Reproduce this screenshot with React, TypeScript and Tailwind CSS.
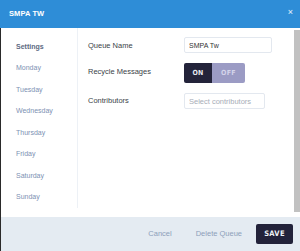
import React, { useState } from 'react';

const days = ['Monday', 'Tuesday', 'Wednesday', 'Thursday', 'Friday', 'Saturday', 'Sunday'];

export default function App() {
  const [recycle, setRecycle] = useState(true);
  const [name, setName] = useState('SMPA Tw');

  return (
    <div className="w-[300px] h-[251px] flex flex-col bg-white overflow-hidden font-['Liberation_Sans',Arial,sans-serif]">
      {/* header */}
      <div className="h-[28px] shrink-0 bg-[#2e8dd7] flex items-center justify-between pl-[9px] pr-[7px] text-white">
        <span className="text-[7.5px] font-bold tracking-[0.1px]">SMPA TW</span>
        <button className="text-[9px] leading-none text-white/90 -mt-[4px]">×</button>
      </div>

      {/* body */}
      <div className="flex-1 flex border-l border-[#2a2a2a] min-h-0">
        <div className="w-[77px] shrink-0 self-start border-r border-[#edf1f6] pt-[8px]">
          <div className="h-[21.5px] flex items-center pl-[15px] text-[7px] font-bold text-[#5c6a82]">Settings</div>
          {days.map((d) => (
            <div key={d} className="h-[21.5px] flex items-center pl-[15px] text-[7px] text-[#7d91b3]">
              {d}
            </div>
          ))}
        </div>

        <div className="flex-1 pl-[10px] pt-[9px] flex flex-col gap-[10px]">
          <div className="flex items-center h-[16px]">
            <span className="w-[96px] text-[7.5px] text-[#3b3f48] mt-[1px]">Queue Name</span>
            <input
              value={name}
              onChange={(e) => setName(e.target.value)}
              className="w-[88px] h-[16px] border border-[#e3e8ef] rounded-[2px] px-[4px] text-[7px] text-[#333] outline-none"
            />
          </div>
          <div className="flex items-center h-[20px]">
            <span className="w-[96px] text-[7.5px] text-[#3b3f48] -mt-[2px]">Recycle Messages</span>
            <div className="flex h-[20px] rounded-[2px] overflow-hidden font-['DejaVu_Sans_Condensed','DejaVu_Sans',sans-serif] font-stretch-condensed font-bold text-[7px] tracking-[0.3px]">
              <button
                onClick={() => setRecycle(true)}
                className={`w-[28px] ${recycle ? 'bg-[#23233a] text-[#e8e8f0]' : 'bg-[#9b9bc4] text-[#d4d4ea]'}`}
              >
                ON
              </button>
              <button
                onClick={() => setRecycle(false)}
                className={`w-[33px] ${!recycle ? 'bg-[#23233a] text-[#e8e8f0]' : 'bg-[#9b9bc4] text-[#d4d4ea]'}`}
              >
                OFF
              </button>
            </div>
          </div>
          <div className="flex items-center h-[16px]">
            <span className="w-[96px] text-[7.5px] text-[#3b3f48]">Contributors</span>
            <input
              placeholder="Select contributors"
              className="w-[81px] h-[16px] border border-[#e3e8ef] rounded-[2px] px-[4px] text-[7.5px] text-[#333] placeholder:text-[#a7adb7] outline-none"
            />
          </div>
        </div>

        {/* scrollbar */}
        <div className="w-[7px] shrink-0 pt-[2px]">
          <div className="h-[182px] w-[6px] ml-[1px] bg-[#c1c1c1]" />
        </div>
      </div>

      {/* footer */}
      <div className="h-[34px] shrink-0 bg-[#e4ebf2] border-l border-[#2a2a2a] flex items-center justify-end pr-[7px]">
        <button className="text-[7.5px] text-[#8d9fba] mr-[24px]">Cancel</button>
        <button className="text-[7.5px] text-[#8d9fba] mr-[14px]">Delete Queue</button>
        <button className="w-[37px] h-[20px] rounded-[2px] bg-[#22223a] text-[#eef0f6] text-[7.5px] font-bold tracking-[0.3px] font-['DejaVu_Sans_Condensed','DejaVu_Sans',sans-serif] font-stretch-condensed">
          SAVE
        </button>
      </div>
    </div>
  );
}
